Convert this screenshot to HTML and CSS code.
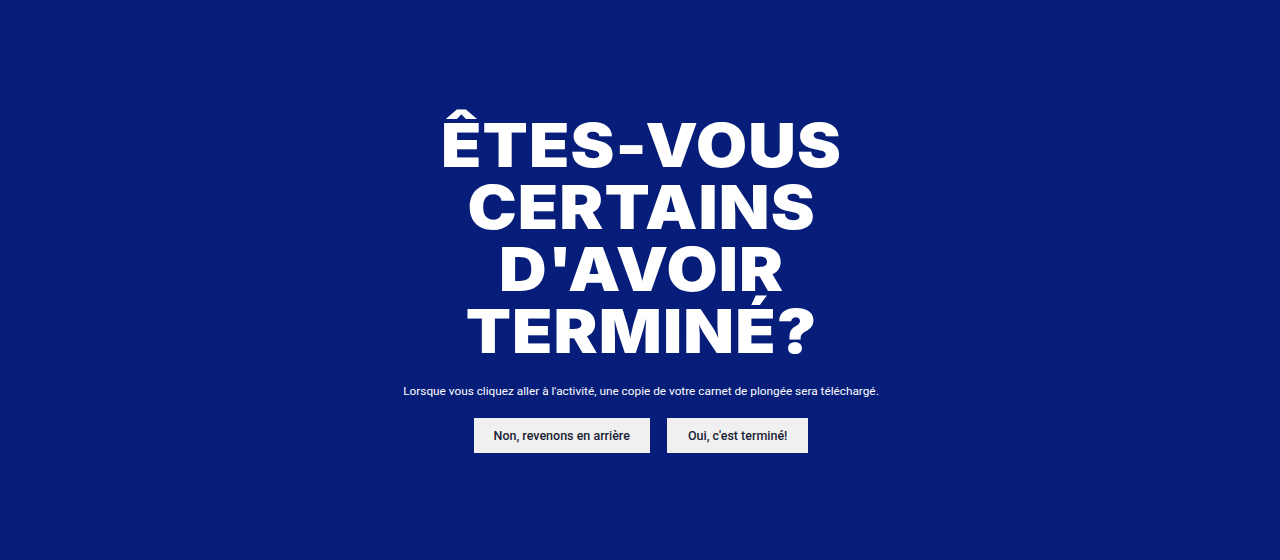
FILE: index.html
```html
<!DOCTYPE html>
<html lang="fr">
<head>
<meta charset="utf-8">
<link rel="stylesheet" href="styles.css">
</head>
<body>
<main class="page">
  <section class="confirm">
    <h1 class="title">Êtes-vous certains d'avoir terminé?</h1>
    <p class="lead">Lorsque vous cliquez aller à l'activité, une copie de votre carnet de plongée sera téléchargé.</p>
    <div class="actions">
      <button class="btn btn-back">Non, revenons en arrière</button>
      <button class="btn btn-done">Oui, c'est terminé!</button>
    </div>
  </section>
</main>
</body>
</html>
```
FILE: styles.css
```css
* { box-sizing: border-box; }
html, body { margin: 0; padding: 0; }
body {
  background: #061d7a;
  font-family: Roboto, "Liberation Sans", sans-serif;
  color: #fff;
}
.page {
  height: 560px;
  display: flex;
  align-items: flex-start;
  justify-content: center;
  padding-left: 2px;
}
.confirm {
  margin-top: 114px;
  display: flex;
  flex-direction: column;
  align-items: center;
}
.title {
  margin: 0;
  width: 420px;
  padding-left: 1px;
  text-align: center;
  text-transform: uppercase;
  font-family: Inter, "Liberation Sans", sans-serif;
  font-weight: 900;
  font-size: 60px;
  line-height: 62px;
  letter-spacing: 1px;
  transform: scaleX(1.1);
}
.lead {
  margin: 20px 0 0;
  font-size: 11.8px;
  line-height: 18px;
}
.actions {
  margin-top: 18px;
  display: flex;
  gap: 17px;
}
.btn {
  height: 35px;
  border: none;
  border-radius: 0;
  background: #f0f0f0;
  color: #1a1d33;
  font-family: Roboto, "Liberation Sans", sans-serif;
  font-size: 12.5px;
  font-weight: 500;
  padding: 0 20px;
  white-space: nowrap;
}
.btn-done { padding: 0 21px; }
```
